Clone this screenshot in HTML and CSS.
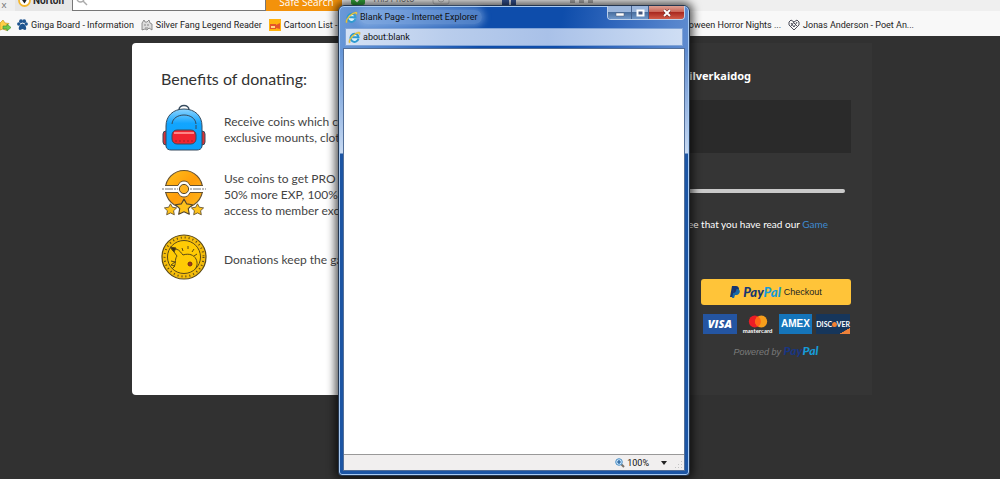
FILE: index.html
```html
<!DOCTYPE html>
<html lang="en">
<head>
<meta charset="utf-8">
<title>Donate</title>
<link rel="stylesheet" href="styles.css">
</head>
<body>
<svg class="defs" aria-hidden="true">
  <defs>
    <linearGradient id="bag" x1="0" y1="0" x2="0" y2="1"><stop offset="0" stop-color="#8bd3ff"/><stop offset=".35" stop-color="#12a5ff"/><stop offset="1" stop-color="#0aa0fa"/></linearGradient>
    <linearGradient id="gold" x1="0" y1="0" x2="1" y2="1"><stop offset="0" stop-color="#ffc21c"/><stop offset=".5" stop-color="#ff9d0a"/><stop offset="1" stop-color="#ffb81c"/></linearGradient>
    <symbol id="ie" viewBox="0 0 14 14">
      <path d="M11.3 8.4A4.4 4.4 0 1 1 11.4 6.8H4.5" fill="#d8f1fb" stroke="#2f9ad0" stroke-width="2.1"/>
      <path d="M1.2 13C-.8 10 6 1.5 11.4 1c2.5-.2 2 2 1 3.6C13 2 10 2 7 4.5 3.5 7 1.600 10.500 2.500 12.200z" fill="#f5cf3c" stroke="#c79b22" stroke-width=".3"/>
    </symbol>
    <symbol id="star" viewBox="0 0 16 16"><path d="M8 1l2.300 4.200 5.200.8-3.700 3.500.9 5L8 12.200l-4.700 2.300.9-5L.5 6l5.200-.8z" fill="#ffc21b" stroke="#57472b" stroke-width="1" stroke-linejoin="round"/></symbol>
  </defs>
</svg>

<header class="browser">
  <div class="toolbar">
    <button class="close-bar" aria-label="Close toolbar">x</button>
    <div class="norton">
      <svg width="13" height="13" viewBox="0 0 13 13"><circle cx="6.500" cy="6.500" r="5.500" fill="#fff" stroke="#f5b72e" stroke-width="1.800"/><path d="M3 4.500l3.500 5 4-6.500" fill="#222"/></svg>
      <span>Norton</span>
    </div>
    <label class="search">
      <svg width="12" height="12" viewBox="0 0 12 12" fill="none" stroke="#aaa" stroke-width="1.500"><circle cx="4.500" cy="4.500" r="3.500"/><path d="M7 7l4 4"/></svg>
      <input type="text" aria-label="Search">
    </label>
    <button class="safe">Safe Search</button>
    <div class="tools">
      <svg width="14" height="14" viewBox="0 0 14 14"><rect width="14" height="14" rx="2" fill="#35ad3d"/><path d="M3 7l3 3 5-6" stroke="#fff" stroke-width="2" fill="none"/></svg>
      <span>This Photo</span>
      <svg class="cam" width="18" height="12" viewBox="0 0 18 12" fill="none" stroke="#bbb"><rect x="1" y="1" width="16" height="10" rx="2"/><circle cx="9" cy="6" r="3"/></svg>
      <svg class="fb" width="14" height="14" viewBox="0 0 14 14"><rect width="14" height="14" fill="#375596"/><path d="M12 4H9.500Q8 4 8 6v8M6 8h5" stroke="#fff" stroke-width="1.800" fill="none"/></svg>
      <svg class="dots" width="26" height="8" viewBox="0 0 26 8" fill="#aaa"><rect x="1" y="1" width="5" height="5"/><rect x="10" y="1" width="5" height="5"/><rect x="19" y="1" width="5" height="5"/></svg>
    </div>
  </div>
  <nav class="bookmarks">
    <div class="marks-left">
      <svg class="add" width="12" height="13" viewBox="0 0 12 13"><path d="M3 1l2 3 4 .5-3 3 .5 4L3 10 0 11V4z" fill="#ffcf45" stroke="#ca9823" stroke-width=".7"/><path d="M3 7h4V5l4 3.500L7 12v-2H3z" fill="#6fc94b" stroke="#3c8a30" stroke-width=".6"/></svg>
      <a href="#"><svg width="11" height="12" viewBox="0 0 11 12" fill="#1e548f"><circle cx="1.800" cy="5" r="1.700"/><circle cx="4" cy="2.200" r="1.900"/><circle cx="7.200" cy="2.200" r="1.900"/><circle cx="9.200" cy="5" r="1.700"/><path d="M5.500 4.500C9 5 10.500 11 8 11c-1.500 0-1.500-1-2.500-1s-1 1-2.500 1C.5 11 2 5 5.500 4.500z"/></svg>Ginga Board - Information</a>
      <a href="#"><svg width="12" height="12" viewBox="0 0 12 12" fill="#ddd" stroke="#777" stroke-width=".8"><path d="M1 11V4l2-3 1 2h2l2-2 1 3 2 1v6l-3-2-2 2-2-1z"/><path d="M4 5v2M7 5v2M4 9h3"/></svg>Silver Fang Legend Reader</a>
      <a href="#"><svg width="12" height="12" viewBox="0 0 12 12"><rect width="12" height="12" fill="#ffb30f"/><path d="M1 5h6v5H1zM7 6l4-2v6L7 9z" fill="#e4562a"/><path d="M2 7h4v2H2z" fill="#ffd985"/></svg>Cartoon List -</a>
    </div>
    <div class="marks-right">
      <a href="#">Halloween Horror Nights ...</a>
      <a href="#"><svg width="12" height="12" viewBox="0 0 12 12" fill="none" stroke="#4b4c59"><path d="M6 11L1 6V3l2-2 3 2 3-2 2 2v3z"/><path d="M3 4l3 4 3-5M6 3L3 7M6 4l3 3"/></svg>Jonas Anderson - Poet An...</a>
    </div>
  </nav>
</header>

<main class="donate">
  <section class="benefits">
    <h1>Benefits of donating:</h1>
    <ul>
      <li>
        <svg width="46" height="48" viewBox="0 0 46 48" stroke="#364b5e" stroke-width="1" stroke-linejoin="round">
          <path d="M18 6c0-6 10-6 10 0" fill="none" stroke-width="1.500"/>
          <rect x="2" y="27" width="7" height="14" rx="3" fill="#d93338"/><rect x="37" y="27" width="7" height="14" rx="3" fill="#d93338"/>
          <path d="M5 22C5 12 12 5 23 5s18 7 18 17v20c0 3-3 4-5 4H10c-2 0-5-1-5-4z" fill="url(#bag)"/>
          <path d="M11 20c1-12 23-12 24 0M35 21v4" fill="none"/>
          <rect x="11" y="26" width="24" height="14" rx="5" fill="#f02430"/><path d="M13 29h20" stroke="#ff8585" stroke-width="2"/><path d="M14 37h18" stroke-dasharray="2 2" stroke="#9e2029"/>
        </svg>
        <p>Receive coins which can<br>exclusive mounts, clothes</p>
      </li>
      <li>
        <svg width="46" height="48" viewBox="0 0 46 48">
          <circle cx="23" cy="20" r="18.500" fill="url(#gold)" stroke="#685331" stroke-width="1.200"/>
          <path d="M3 16h40v8H3z" fill="#fff"/><path d="M4 16.500h13c2-6 10-6 12 0h13M4 23.500h13c2 6 10 6 12 0h13" fill="#fff" stroke="#685331"/>
          <path d="M17.600 17h10.800v6H17.600z" fill="#fff"/><path d="M1 20h16M29 20h16" stroke="#777" stroke-dasharray="2 1 8 1"/>
          <circle cx="23" cy="20" r="4.600" fill="#ffb422" stroke="#57472b"/>
          <use href="#star" x="14" y="29" width="18" height="18"/><use href="#star" x="3" y="34" width="13" height="13"/><use href="#star" x="30" y="34" width="13" height="13"/>
        </svg>
        <p>Use coins to get PRO and<br>50% more EXP, 100% more<br>access to member exclusive</p>
      </li>
      <li>
        <svg width="46" height="48" viewBox="0 0 46 48" fill="none" stroke="#5c4a17">
          <circle cx="23" cy="23" r="22" fill="#f5bd0b" stroke-width="1.200"/><circle cx="23" cy="23" r="19.500" stroke-width="2" stroke-dasharray="1 3"/><circle cx="23" cy="23" r="16.500" fill="#ffcb05"/>
          <path d="M12 34c4-4 1-8 4-12l-6-8 5 1c4 1 5 4 7 6 6-2 11 0 13 4 2 4 1 8-1 10M10 27l4 1-4 3 4 1-3 3M21 14l1 3M27 12v3M33 15l-2 3M36 20l-3 2"/>
          <path d="M9 13l6 1-2 4z" fill="#3b3014"/><circle cx="29" cy="30" r="2" fill="#a1341d" stroke="#712e16"/>
        </svg>
        <p>Donations keep the game</p>
      </li>
    </ul>
  </section>

  <section class="payment">
    <p class="user">Silverkaidog</p>
    <div class="amount"></div>
    <div class="track"></div>
    <p class="terms">you agree that you have read our <a href="#">Game</a></p>
    <div class="pay">
      <button class="checkout">
        <svg width="10" height="13" viewBox="0 0 10 13"><path d="M2 0h4c4 0 4 6 0 7H4l-1 4H0z" fill="#17366f"/><path d="M4 3h4c3 1 2 5-1 6H5l-1 3H2z" fill="#1769a6"/><path d="M4 3h2.500C6 6 5 7 3 7z" fill="#222d65"/></svg>
        <span class="brand">Pay<b>Pal</b></span><span>Checkout</span>
      </button>
      <div class="cards">
        <span class="card visa">VISA</span>
        <span class="card master"><svg width="22" height="13" viewBox="0 0 24 14"><circle cx="8.500" cy="7" r="6.500" fill="#eb1c26"/><circle cx="15.500" cy="7" r="6.500" fill="#f79e1b"/><path d="M12 1.500a6.500 6.500 0 0 1 0 11 6.500 6.500 0 0 1 0-11" fill="#ff6416"/></svg><span>mastercard</span></span>
        <span class="card amex">AMEX</span>
        <span class="card discover">DISC<i></i>VER</span>
      </div>
      <p class="powered">Powered by <span class="brand">Pay<b>Pal</b></span></p>
    </div>
  </section>
</main>

<section class="window" aria-label="Blank Page">
  <div class="titlebar">
    <svg width="13" height="13"><use href="#ie"/></svg>
    <span class="title">Blank Page - Internet Explorer</span>
    <div class="controls">
      <button class="min" aria-label="Minimize"><svg width="10" height="8" viewBox="0 0 10 8"><path d="M1 4h8v3H1z" fill="#fff" stroke="#4c5871" stroke-width=".5"/></svg></button>
      <button class="max" aria-label="Maximize"><svg width="9" height="8" viewBox="0 0 9 8"><path d="M1.500 1.500h6v5h-6z" fill="#44577f" stroke="#fff" stroke-width="2"/></svg></button>
      <button class="close" aria-label="Close"><svg width="10" height="8" viewBox="0 0 10 8"><path d="M2 1l6 6M8 1L2 7" stroke="#622" stroke-width="3"/><path d="M2 1l6 6M8 1L2 7" stroke="#fff" stroke-width="2"/></svg></button>
    </div>
  </div>
  <label class="address"><svg width="13" height="13"><use href="#ie"/></svg><input type="text" value="about:blank" aria-label="Address"></label>
  <div class="view">
    <div class="blank"></div>
    <div class="status">
      <button class="zoom"><svg width="10" height="10" viewBox="0 0 10 10"><path d="M6 6l3 3" stroke="#78736d" stroke-width="2"/><circle cx="4" cy="4" r="3.300" fill="#cce7fa" stroke="#4b8ec6"/><path d="M2 4h4M4 2v4" stroke="#165597" stroke-width="1.200"/></svg>100%<i></i></button>
      <svg width="9" height="9" viewBox="0 0 9 9" fill="#c4c4c4"><path d="M6 0h1v1H6zM6 3h1v1H6zM6 6h1v1H6zM3 3h1v1H3zM3 6h1v1H3zM0 6h1v1H0z"/></svg>
    </div>
  </div>
</section>
</body>
</html>
```
FILE: styles.css
```css
* { box-sizing: border-box; }
body { margin: 0; min-height: 100vh; display: flex; flex-direction: column; position: relative; background: #313131; font-family: Lato, "Open Sans", sans-serif; overflow: hidden; }
p, h1, ul { margin: 0; padding: 0; }
button, input { font: inherit; border: 0; padding: 0; background: none; color: inherit; }
svg { flex: none; }
a { text-decoration: none; color: inherit; }
.defs { position: absolute; width: 0; height: 0; }

.toolbar { height: 12px; display: flex; align-items: flex-end; overflow: hidden; background: #efefef; border-bottom: 1px solid #f8f8f8; color: #777; font-size: 10px; line-height: 14px; }
.close-bar { width: 15px; padding-right: 7px; }
.norton { width: 57px; height: 14px; padding-left: 3px; padding-bottom: 4px; display: flex; align-items: flex-end; gap: 2px; background: #e6e6e6; }
.norton span { font: bold 10px/12px Roboto, sans-serif; color: #262626; }
.search { width: 194px; height: 24px; display: flex; align-items: flex-end; padding: 0 3px 4px; background: #fff; border: 1px solid #777; }
.search input { min-width: 0; flex: 1; }
.safe { width: 76px; height: 24px; padding: 6px 0 0 5px; background: #f3920b; color: #fff; font: 10px/12px "Open Sans", sans-serif; }
.tools { display: flex; align-items: flex-end; padding: 0 0 6px 9px; }
.tools span { margin: 0 18px 0 7px; font-size: 9px; line-height: 12px; }
.fb { margin-left: 52px; }
.dots { margin-left: 53px; }

.bookmarks { height: 24px; display: flex; justify-content: space-between; background: #f8f8f8; color: #222; font: 9px/14px Roboto, sans-serif; white-space: nowrap; }
.bookmarks div { display: flex; align-items: center; gap: 7px; padding-top: 2px; }
.bookmarks a { display: flex; align-items: center; gap: 3px; }
.marks-left .add { margin-right: -2px; }
.bookmarks .marks-right { padding-right: 86px; }

.donate { flex: 1; display: grid; grid-template-columns: 1fr 1fr; align-items: start; padding: 7px 128px 0 132px; }
.benefits, .payment { height: 352px; }
.benefits { padding: 25px 29px; border-radius: 4px 0 0 4px; background: #fff; color: #444; }
h1 { font-size: 16px; font-weight: 400; line-height: 22px; color: #333; }
ul { list-style: none; display: grid; gap: 17px; margin-top: 14px; }
li { height: 48px; display: flex; align-items: center; gap: 17px; font-size: 12px; line-height: 16px; white-space: nowrap; }
li p { padding-top: 3px; }
.payment { padding: 25px 21px 0 0; background: #353535; color: #fff; text-align: right; font: 11px/16px "Noto Sans", sans-serif; }
.user { font-weight: 700; padding-right: 100px; }
.amount { height: 53px; margin-top: 16px; background: #2a2a2a; }
.track { height: 4px; margin: 36px 6px 0 0; border-radius: 2px; background: #cacaca; }
.terms { margin-top: 23px; padding-right: 23px; font: 10px/16px Lato, sans-serif; }
.terms a { color: #3e8ad0; }
.pay { width: 150px; margin: 47px 0 0 auto; }
.checkout { width: 100%; height: 26px; display: flex; align-items: center; justify-content: center; gap: 3px; border-radius: 3px; background: #ffc439; color: #222; font: 9px/12px "Liberation Sans", Arial, sans-serif; }
.brand { font: italic 900 13px/14px Lato, sans-serif; color: #17366f; }
.brand b { font-weight: 900; color: #179bd7; }
.cards { display: grid; grid-template-columns: repeat(4, 1fr); gap: 4px; margin: 9px 1px 0 2px; }
.card { min-width: 0; height: 20px; display: flex; align-items: center; justify-content: center; color: #fff; font: bold 11px/14px "Open Sans", sans-serif; }
.visa { background: #2455a2; font-style: italic; font-weight: 800; }
.master { flex-direction: column; font: bold 6px/6px Lato, sans-serif; }
.amex { background: #1575ba; font: bold 10px/14px "Liberation Sans", sans-serif; }
.discover { background: linear-gradient(150deg, #16365b 84%, #ee8139 85%); font: bold 7px/14px Lato, sans-serif; }
.discover i { width: 5px; height: 5px; border-radius: 50%; background: #f28131; }
.powered { margin-top: 10px; color: #7b7b7b; text-align: center; font: italic 9px/16px "Liberation Sans", Arial, sans-serif; }
.powered .brand { font-size: 12px; color: #193681; }

.window { position: absolute; top: 5px; bottom: 3px; left: 338px; width: 352px; display: flex; flex-direction: column; padding: 0 4px 4px; border: 1px solid #253750; border-radius: 6px 6px 4px 4px; background: linear-gradient(#5d8bcd00 147px, #1c55a4 148px), linear-gradient(#d8e6f800 45px, #c8daf2 147px), linear-gradient(100deg, #6b9ad8 0%, #4a7fcc 14%, #0e4dab 34%, #0e4dab 52%, #3268bd 65%, #5584cc 78%, #87a8dc); box-shadow: inset 0 0 0 1px #a9cbf3, 0 0 9px 3px rgba(0, 0, 0, .65); color: #111; font: 9px/14px Roboto, sans-serif; }
.titlebar { height: 22px; display: flex; align-items: center; gap: 2px; padding-left: 2px; }
.title { padding-right: 4px; border-radius: 8px; background: rgba(190, 215, 245, .35); box-shadow: 0 0 6px 3px rgba(190, 215, 245, .35); }
.controls { align-self: flex-start; margin-left: auto; display: flex; height: 14px; border: 1px solid #bcd0ea; border-top: 0; border-radius: 0 0 4px 4px; overflow: hidden; }
.controls button { display: flex; align-items: center; justify-content: center; border-right: 1px solid #45618e; background: linear-gradient(#9bb6dc 45%, #496f9f 50%, #7098ca); }
.controls .min { width: 24px; }
.controls .max { width: 17px; }
.controls .close { width: 35px; border-right: 0; background: linear-gradient(#dda093, #cb6557 45%, #aa2920 50%, #d15b48); }
.address { height: 18px; margin: 0 2px 2px; display: flex; align-items: center; gap: 2px; padding-left: 2px; border: 1px solid #81a4d7; background: linear-gradient(90deg, #d4e1f4, #b9cdec 30%, #a9c1e8 60%, #cfdef4); }
.address input { flex: 1; min-width: 0; height: 14px; }
.view { flex: 1; display: flex; flex-direction: column; border: 1px solid #536f98; background: #fff; }
.blank { flex: 1; }
.status { height: 16px; display: flex; align-items: center; justify-content: flex-end; border-top: 1px solid #999; background: #f1efef; }
.zoom { display: flex; align-items: center; gap: 2px; margin-right: 8px; }
.zoom i { margin-left: 10px; border: 3px solid transparent; border-top: 4px solid #222; border-bottom: 0; }
.status > svg { align-self: flex-end; }
```
